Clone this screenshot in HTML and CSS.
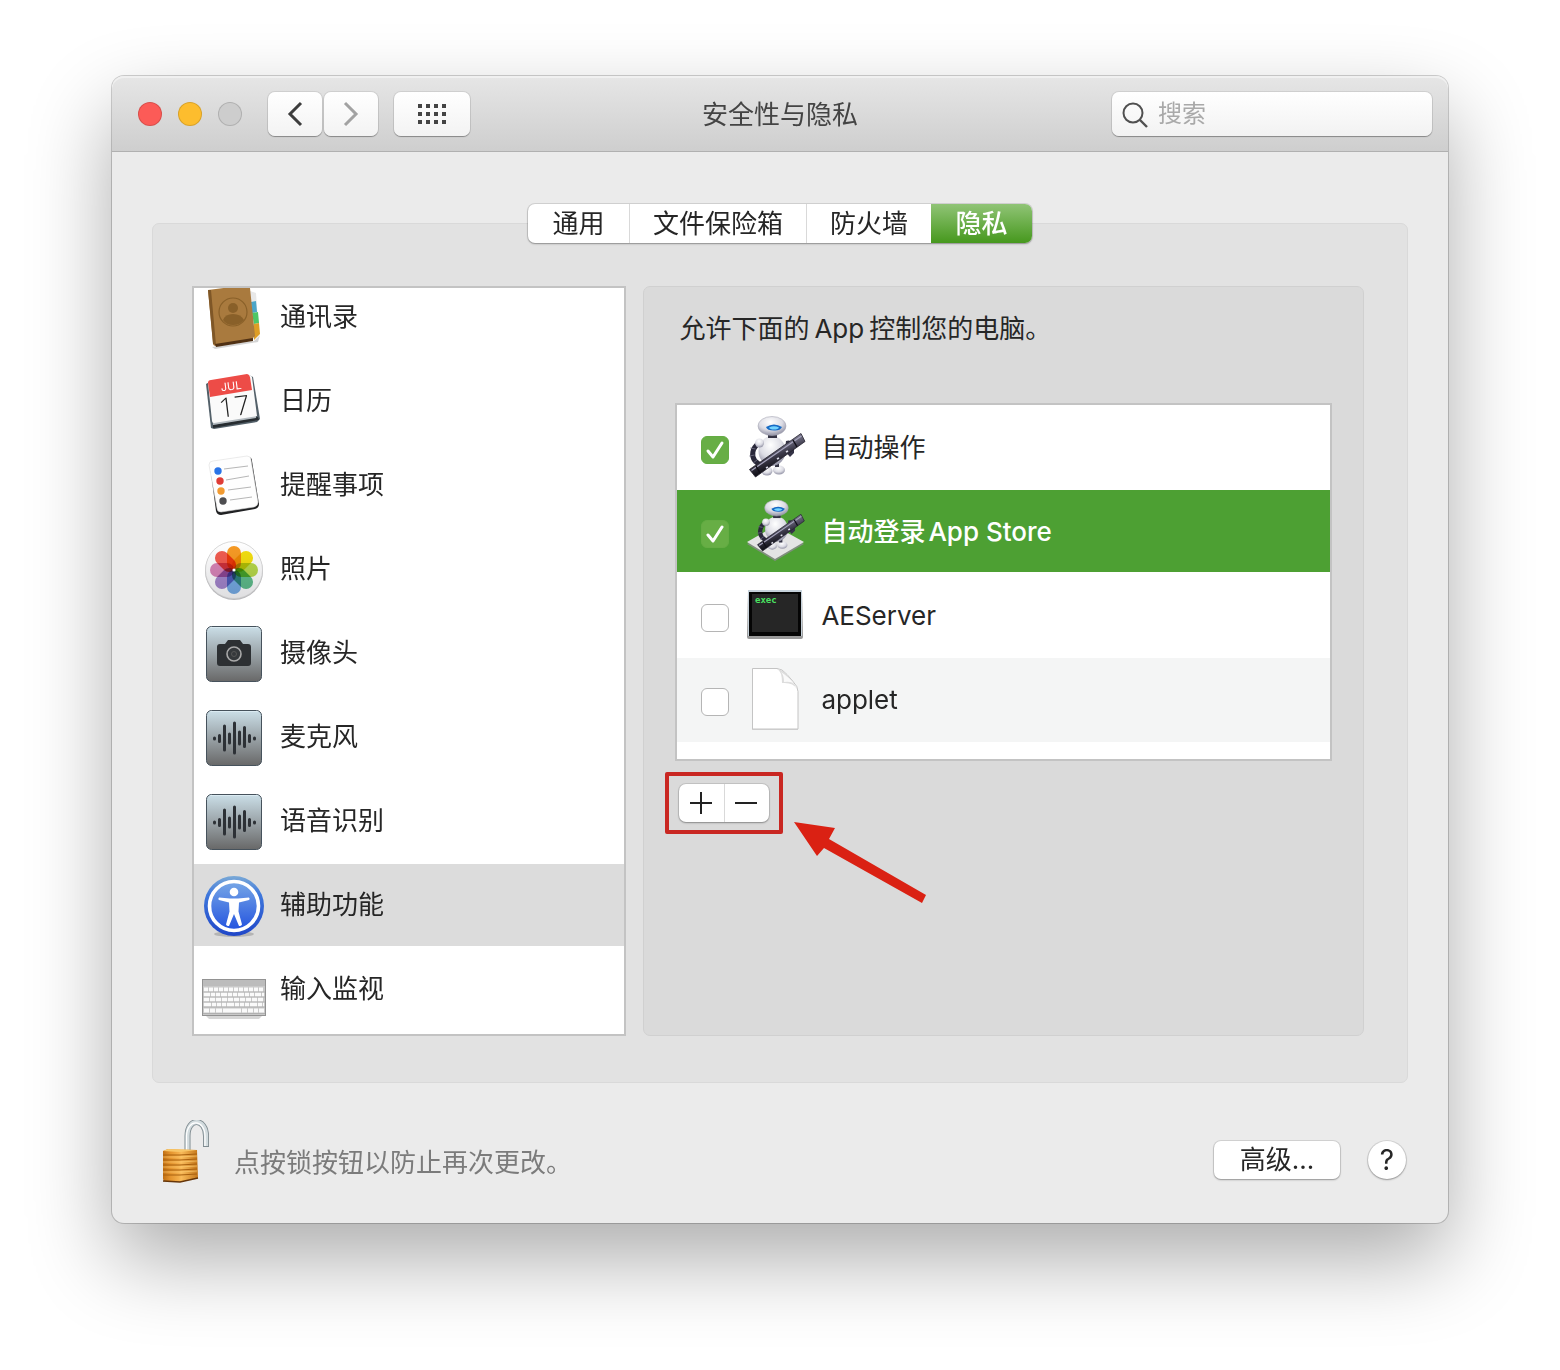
FILE: index.html
```html
<!DOCTYPE html>
<html lang="zh-CN">
<head>
<meta charset="utf-8">
<meta name="viewport" content="width=device-width, initial-scale=1">
<title>安全性与隐私</title>
<link rel="stylesheet" href="styles.css">
</head>
<body>
<svg class="defs" aria-hidden="true">
  <defs>
    <linearGradient id="steel" x1="0" y1="0" x2="0" y2="1"><stop offset="0" stop-color="#cbdfe8"/><stop offset=".45" stop-color="#9fa9ae"/><stop offset="1" stop-color="#686868"/></linearGradient>
    <linearGradient id="blue" x1="0" y1="0" x2="0" y2="1"><stop offset="0" stop-color="#7aa9d6"/><stop offset=".3" stop-color="#3f78dc"/><stop offset="1" stop-color="#1f46c8"/></linearGradient>
    <linearGradient id="blueFace" x1="0" y1="0" x2="0" y2="1"><stop offset="0" stop-color="#77a7e6"/><stop offset="1" stop-color="#2353df"/></linearGradient>
    <linearGradient id="brass" x1="0" y1="0" x2="1" y2="0"><stop offset="0" stop-color="#c06f14"/><stop offset=".2" stop-color="#e3922c"/><stop offset=".45" stop-color="#f3ae4a"/><stop offset=".52" stop-color="#f9bb5a"/><stop offset="1" stop-color="#c4761a"/></linearGradient>
    <linearGradient id="tube" x1=".4" y1=".3" x2=".6" y2=".7"><stop offset="0" stop-color="#77758a"/><stop offset=".5" stop-color="#3a3848"/><stop offset="1" stop-color="#15141c"/></linearGradient>
    <radialGradient id="shell" cx=".45" cy=".3" r=".75"><stop offset="0" stop-color="#fff"/><stop offset=".55" stop-color="#dcdce4"/><stop offset="1" stop-color="#85859a"/></radialGradient>
    <linearGradient id="disc" x1="0" y1="0" x2="0" y2="1"><stop offset="0" stop-color="#fff"/><stop offset="1" stop-color="#dedee0"/></linearGradient>
    <symbol id="wave" viewBox="0 0 64 64">
      <rect x="4.500" y="4.500" width="55" height="55" rx="5" fill="url(#steel)" stroke="#46525c"/>
      <path d="M8 5.500h48" stroke="#e4f2f8" opacity=".7"/>
      <g stroke="#2d3136" stroke-width="3" stroke-linecap="round"><path d="M12.500 32v1M17.500 29.500v6M22.500 20v24M27.500 28v9M32.500 17v30M37.500 26v12M42.500 21.500v19M47.500 29.500v6M52.500 32v1"/></g>
    </symbol>
    <symbol id="robot" viewBox="0 0 64 64">
      <ellipse cx="24" cy="55" rx="5.500" ry="4.500" fill="url(#shell)"/>
      <ellipse cx="36" cy="54" rx="6" ry="4.500" fill="url(#shell)"/>
      <path d="M22 46v7M34 45v6" stroke="#333344" stroke-width="4"/>
      <ellipse cx="29" cy="35" rx="13.500" ry="15" fill="url(#shell)"/>
      <path d="M16 27c-7 5-8 13-4 18l5 4" fill="none" stroke="#29283a" stroke-width="5"/>
      <path d="M12.500 33l-5-1M11.500 39l-5 1M14 44l-4 3" stroke="#656478" stroke-width="1"/>
      <circle cx="16.500" cy="27" r="4.500" fill="url(#shell)"/>
      <path d="M25 18h9v4h-9z" fill="#343344"/>
      <ellipse cx="29" cy="10" rx="14" ry="9.500" fill="url(#shell)" stroke="#a8a8b6" stroke-width=".6"/>
      <path d="M23 11q8-5 16 0-2 4-8 3.500-7 0-8-3.500z" fill="#176ac4"/>
      <path d="M26 11.500q5-2.500 10 0-1 2-5 2t-5-2z" fill="#74d4ff"/>
      <path d="M43 25q7-2 8 6v6l-4 4-5-6" fill="#353347"/>
      <path d="M6.500 53.500L58 17.500l4 8L12.500 61z" fill="url(#tube)" stroke="#24222f" stroke-width=".8"/>
      <path d="M8.500 54.500L58.500 20" stroke="#a6a4bc" stroke-width="1.400"/>
      <path d="M50 24l4 7M13 50l4 7" stroke="#111019" stroke-width="1.500"/>
      <path d="M23 52l2-1M34 43l2-1M43 36l2-1" stroke="#dedeea" stroke-width="1.800"/>
    </symbol>
  </defs>
</svg>

<main class="window">
  <header class="toolbar">
    <div class="toolbar-left">
      <div class="lights">
        <button class="light close" aria-label="关闭"></button>
        <button class="light minimize" aria-label="最小化"></button>
        <button class="light zoom" aria-label="缩放" disabled></button>
      </div>
      <div class="nav">
        <button class="tool" aria-label="后退"><svg width="20" height="28" viewBox="0 0 20 28"><path d="M16 3L5 14l11 11" fill="none" stroke="#3d3d3d" stroke-width="3"/></svg></button>
        <button class="tool" aria-label="前进" disabled><svg width="20" height="28" viewBox="0 0 20 28"><path d="M4 3l11 11L4 25" fill="none" stroke="#a2a2a2" stroke-width="3"/></svg></button>
      </div>
      <button class="tool tool-wide" aria-label="显示全部"><svg width="28" height="20" viewBox="0 0 28 20"><path d="M0 2h28M0 10h28M0 18h28" stroke="#444" stroke-width="4" stroke-dasharray="4 4"/></svg></button>
    </div>
    <h1 class="title">安全性与隐私</h1>
    <label class="search">
      <svg width="28" height="28" viewBox="0 0 28 28" aria-hidden="true"><circle cx="11" cy="13" r="9.500" fill="none" stroke="#505050" stroke-width="2"/><path d="M18 20l7 7" stroke="#505050" stroke-width="2.400"/></svg>
      <input type="search" placeholder="搜索" aria-label="搜索">
    </label>
  </header>

  <div class="content">
    <div class="tabs" role="tablist">
      <button class="tab" role="tab">通用</button>
      <button class="tab" role="tab">文件保险箱</button>
      <button class="tab" role="tab">防火墙</button>
      <button class="tab active" role="tab" aria-selected="true">隐私</button>
    </div>

    <section class="panel">
      <ul class="services">
        <li class="service"><svg class="icon" viewBox="0 0 64 64">
          <path d="M10 61l42-6 6-6-2 7-43 7z" fill="#aaa" opacity=".5"/>
          <path d="M48 5l6 2 3 42-8 6z" fill="#e8e8e8"/><path d="M49 16l5-1 1 11-5 1z" fill="#4ba5c8"/><path d="M50 27l6-1 1 11-5 1z" fill="#4dc766"/><path d="M52 38l5-1 1 11-6 6z" fill="#dd9d25"/>
          <path d="M6 4L45 -1q3 0 3 3l5 48-4 4-35 6q-3 0-3-3z" fill="#a97a3e"/><path d="M6 4l5 54 3 1L9 4z" fill="#7f5727"/>
          <path d="M13 58l38-6v3l-37 6z" fill="#503114"/>
          <circle cx="31" cy="26" r="14" fill="none" stroke="#896029" stroke-width="1.200"/><circle cx="31" cy="22" r="5" fill="#896029"/><path d="M21 34q2-6 10-6t11 6q-4 5-11 5t-10-5z" fill="#896029"/>
        </svg><span>通讯录</span></li>
        <li class="service"><svg class="icon" viewBox="0 0 64 64">
          <path d="M4 14l5-3 38-6 4 2 7 42-3 3-43 7-3-1z" fill="#536069"/>
          <path d="M11 55l45-8 1 3-46 8z" fill="#262c30"/><path d="M11 51l43-7v4l-43 7z" fill="#b4bbc0"/>
          <path d="M6 13L47 5q2 0 3 2l5 39-43 7q-2 0-2-2z" fill="#fafafa"/>
          <path d="M6 13q0-3 3-3l36-6q2 0 3 3l2 13-42 7z" fill="#ed4c47"/>
          <text x="19" y="20" transform="rotate(-7 29 18)" class="cal-month">JUL</text>
          <text x="17" y="46" transform="rotate(-7 31 38)" class="cal-day">17</text>
        </svg><span>日历</span></li>
        <li class="service"><svg class="icon" viewBox="0 0 64 64">
          <path d="M8 12q0-4 4-4l34-5q4 0 4 4l7 43q0 4-4 5l-34 6q-4 0-5-4z" fill="#202123"/>
          <path d="M7 11q0-4 4-4l34-5q4 0 4 4l7 42q0 4-4 5l-33 5q-4 0-4-4z" fill="#fefefe" stroke="#ddd" stroke-width=".6"/>
          <circle cx="16" cy="17" r="3.700" fill="#2973e7"/><circle cx="18" cy="27" r="3.700" fill="#df3c36"/><circle cx="19" cy="37" r="3.700" fill="#f29b31"/><circle cx="21" cy="47" r="3.700" fill="#4d4d50"/>
          <path d="M22 15l24-3M24 26l23-4M26 36l23-3M28 46l22-3" stroke="#b6b6b6" stroke-width="1"/>
        </svg><span>提醒事项</span></li>
        <li class="service"><svg class="icon" viewBox="0 0 64 64">
          <circle cx="32" cy="33" r="29" fill="#b9b9bc"/><circle cx="32" cy="32" r="28.500" fill="url(#disc)" stroke="#ccc" stroke-width=".7"/>
          <g class="petals">
            <rect x="25" y="8" width="14" height="24" rx="7" fill="#f89b24"/>
            <rect x="25" y="8" width="14" height="24" rx="7" fill="#f4df10" transform="rotate(45 32 32)"/>
            <rect x="25" y="8" width="14" height="24" rx="7" fill="#b7d84b" transform="rotate(90 32 32)"/>
            <rect x="25" y="8" width="14" height="24" rx="7" fill="#5fbd8c" transform="rotate(135 32 32)"/>
            <rect x="25" y="8" width="14" height="24" rx="7" fill="#76ace5" transform="rotate(180 32 32)"/>
            <rect x="25" y="8" width="14" height="24" rx="7" fill="#a486cc" transform="rotate(225 32 32)"/>
            <rect x="25" y="8" width="14" height="24" rx="7" fill="#d884b7" transform="rotate(270 32 32)"/>
            <rect x="25" y="8" width="14" height="24" rx="7" fill="#f25c50" transform="rotate(315 32 32)"/>
          </g><circle cx="32" cy="32" r="1.600" fill="#fff"/>
        </svg><span>照片</span></li>
        <li class="service"><svg class="icon" viewBox="0 0 64 64">
          <rect x="4.500" y="4.500" width="55" height="55" rx="5" fill="url(#steel)" stroke="#46525c"/><path d="M8 5.500h48" stroke="#e4f2f8" opacity=".7"/>
          <path d="M18 22h5l3-4h12l3 4h5q3 0 3 3v16q0 3-3 3H18q-3 0-3-3V25q0-3 3-3z" fill="#2d3033"/><circle cx="32" cy="32" r="7" fill="#35383b" stroke="#aaa" stroke-width="1.600"/><circle cx="32" cy="32" r="2.500" fill="none" stroke="#565656"/>
        </svg><span>摄像头</span></li>
        <li class="service"><svg class="icon"><use href="#wave"/></svg><span>麦克风</span></li>
        <li class="service"><svg class="icon"><use href="#wave"/></svg><span>语音识别</span></li>
        <li class="service selected" aria-current="true"><svg class="icon" viewBox="0 0 64 64">
          <ellipse cx="32" cy="60" rx="20" ry="3" fill="#999" opacity=".6"/>
          <circle cx="32" cy="32" r="30" fill="url(#blue)"/><circle cx="32" cy="32" r="24.500" fill="url(#blueFace)" stroke="#fff" stroke-width="3.600"/>
          <circle cx="32" cy="18" r="4.300" fill="#fff"/>
          <path d="M17 23.500l11 1h8l11-1q1.500 1.500 0 2.500l-10 2.500-.5 9 3.500 13q-1 2-3 1.500L32 40l-5 12q-2 .5-3-1.500l3.500-13-.5-9L17 26q-1.500-1 0-2.500z" fill="#fff"/>
        </svg><span>辅助功能</span></li>
        <li class="service"><svg class="icon" viewBox="0 0 64 64">
          <path d="M3 57h58l-4 4H7z" fill="#777" opacity=".3"/>
          <rect x=".5" y="21.500" width="63" height="36" fill="#c9c9c9" stroke="#929292"/><path d="M1 22h62v6H1z" fill="#bcbcbc"/>
          <g stroke="#fafafa" stroke-width="4"><path d="M2 31.500h60" stroke-dasharray="4 1"/><path d="M2 36.500h60" stroke-dasharray="6 1 4 1 4 1"/><path d="M2 41.500h60" stroke-dasharray="5 1"/><path d="M2 46.500h60" stroke-dasharray="7 1 4 1 4 1 4 1"/><path d="M2 52.500h5M8 52.500h5M14 52.500h6M21 52.500h18M40 52.500h5M46 52.500h5M52 52.500h4M57 52.500h5"/></g>
          <path d="M1 34h62M1 39h62M1 44h62M1 49h62M1 55.500h62" stroke="#aaa" stroke-width=".8"/>
        </svg><span>输入监视</span></li>
      </ul>

      <section class="detail">
        <h2 class="prompt">允许下面的<span class="latin">App</span>控制您的电脑。</h2>
        <ul class="apps">
          <li><label class="app"><input type="checkbox" checked><svg class="icon"><use href="#robot"/></svg><span>自动操作</span></label></li>
          <li><label class="app selected"><input type="checkbox" checked><svg class="icon" viewBox="0 0 64 64">
            <path d="M4 44L32 28l29 16-29 17z" fill="#808e7d"/><path d="M4 42L32 26l29 16-29 17z" fill="#e4e4e4"/><use href="#robot" x="9" y="-1" width="54" height="55"/>
          </svg><span>自动登录<span class="latin">App Store</span></span></label></li>
          <li><label class="app"><input type="checkbox"><svg class="icon" viewBox="0 0 64 64">
            <path d="M5 7h54l1 46q0 2-2 2H6q-2 0-2-2z" fill="#9a9a9a"/><path d="M5 6h54v46H5z" fill="#c5d1da"/><path d="M6 8h52v44H6z" fill="#050505"/><path d="M9 10h46v38H9z" fill="#262626"/>
            <text x="12" y="19" class="exec">exec</text>
          </svg><span>AEServer</span></label></li>
          <li><label class="app striped"><input type="checkbox"><svg class="icon" viewBox="0 0 64 64">
            <path d="M9 2h26q12 4 20 19v41H9z" fill="#bfbfbf" opacity=".6"/><path d="M9.500 .5H34q5 0 10 6l6 7q5 5 5 10v37.500H9.500z" fill="#fff" stroke="#c4c4c4"/>
            <path d="M34 1q5 2 5 14 11-1 15 6-4-8-10-14-5-6-10-6z" fill="#ddd"/><path d="M38 4q3 3 3 10 7-1 10 2-4-6-13-12z" fill="#fafafa"/>
          </svg><span>applet</span></label></li>
        </ul>
        <div class="edit">
          <button class="edit-button" aria-label="添加"><svg width="24" height="24" viewBox="0 0 24 24"><path d="M0 12h22M11 1v22" stroke="#222" stroke-width="2"/></svg></button>
          <button class="edit-button" aria-label="移除"><svg width="24" height="24" viewBox="0 0 24 24"><path d="M0 12h22" stroke="#222" stroke-width="2"/></svg></button>
          <div class="highlight"></div>
          <svg class="arrow" width="136" height="84" viewBox="0 0 136 84"><path d="M1 2l41 6-6 11L133 75l-4 8L31 28l-7 8z" fill="#da2113"/></svg>
        </div>
      </section>
    </section>

    <footer class="footer">
      <button class="lock" aria-label="锁定"><svg width="50" height="64" viewBox="0 0 50 64">
        <path d="M25.500 32V16C25.500-3 44-2 44 16v11" fill="none" stroke="#7f8b90" stroke-width="6"/><path d="M25.500 32V16C25.500-3 44-2 44 16v10" fill="none" stroke="#d3dcdf" stroke-width="4.200"/><path d="M24.500 32V16C25-2 43-1 43 16v10" fill="none" stroke="#fff" stroke-width="1.200"/>
        <path d="M1 31l5-2 29 1 1 28-18 4-16-1-1-2z" fill="url(#brass)"/><path d="M1 31l5-2 29 1-17 2z" fill="#f8c667"/>
        <path d="M1 35h17l17-1M1 40h17l17-1M1 45h17l17-1M1 50h17l17-1M1 55h17l17-1" fill="none" stroke="#a8600f" stroke-width="1"/><path d="M1 37h17l17-1M1 42h17l17-1M1 47h17l17-1M1 52h17l17-1" fill="none" stroke="#ffd075" stroke-width="1" opacity=".6"/><path d="M1 61l17 1 18-4" fill="none" stroke="#663508" stroke-width="1.500"/>
      </svg></button>
      <p class="note">点按锁按钮以防止再次更改。</p>
      <button class="advanced">高级...</button>
      <button class="help" aria-label="帮助">?</button>
    </footer>
  </div>
</main>
</body>
</html>
```
FILE: styles.css
```css
* { box-sizing: border-box; }

body {
  margin: 0;
  padding: 76px 112px 148px;
  background: #fff;
  color: #262626;
  font: 26px/40px Inter, "Noto Sans CJK SC", sans-serif;
}

button, input {
  margin: 0;
  padding: 0;
  border: 0;
  color: inherit;
  font: inherit;
}

ul { margin: 0; padding: 0; list-style: none; }
svg { display: block; flex: none; }
.defs { position: absolute; width: 0; height: 0; }

.window {
  border-radius: 12px;
  background: #ebebeb;
  box-shadow: 0 0 0 1px rgba(0, 0, 0, .18), 0 36px 84px rgba(0, 0, 0, .33);
}

/* Toolbar */
.toolbar {
  display: grid;
  grid-template-columns: 1fr auto 1fr;
  align-items: center;
  height: 76px;
  padding: 0 16px;
  border-radius: 12px 12px 0 0;
  background: linear-gradient(#e6e6e6, #cecece);
  box-shadow: inset 0 2px 0 #f0f0f0, inset 0 -1px 0 #b0b0b0;
}
.toolbar-left { display: flex; align-items: center; gap: 16px; }
.lights { display: flex; gap: 16px; margin: 0 10px; }
.light { width: 24px; height: 24px; border: 1px solid rgba(0, 0, 0, .14); border-radius: 50%; }
.close { background: #fc5b57; }
.minimize { background: #fdbd2e; }
.zoom { background: #cdcdcd; }
.nav { display: flex; gap: 2px; }
.tool {
  display: grid;
  place-items: center;
  width: 54px;
  height: 44px;
  border-radius: 7px;
  background: linear-gradient(#fff, #f3f3f3);
  box-shadow: 0 0 0 1px rgba(0, 0, 0, .08), 0 1px 1px rgba(0, 0, 0, .3);
}
.tool-wide { width: 76px; }
.title { margin: 0; padding-top: 2px; font-size: 26px; font-weight: 400; color: #444; }
.search {
  display: flex;
  align-items: center;
  justify-self: end;
  gap: 8px;
  width: 320px;
  height: 44px;
  padding: 0 10px;
  border-radius: 7px;
  background: linear-gradient(#fff, #f2f2f2);
  box-shadow: 0 0 0 1px rgba(0, 0, 0, .08), 0 1px 1px rgba(0, 0, 0, .3);
}
.search input { flex: 1; min-width: 0; background: none; font-size: 24px; outline: 0; }
.search input::placeholder { color: #a9a9a9; opacity: 1; }

/* Tabs straddle the top edge of the panel */
.content { padding: 52px 40px 39px; }
.tabs {
  position: relative;
  display: flex;
  width: fit-content;
  margin: 0 auto -20px;
  border-radius: 7px;
  background: #fff;
  box-shadow: 0 0 0 1px rgba(0, 0, 0, .1), 0 1px 2px rgba(0, 0, 0, .3);
}
.tab {
  min-width: 101px;
  height: 39px;
  padding: 0 23px;
  border-left: 1px solid #d9d9d9;
  background: none;
  line-height: 39px;
}
.tab:first-child { border-left: 0; }
.tab.active {
  padding: 0 22px;
  border: 0;
  border-radius: 0 7px 7px 0;
  background: linear-gradient(#90c476, #46981d);
  color: #fff;
  font-weight: 500;
}

.panel {
  display: grid;
  grid-template-columns: 434fr 720fr;
  gap: 17px;
  padding: 62px 43px 46px 39px;
  border: 1px solid #d9d9d9;
  border-radius: 7px;
  background: #e2e2e2;
}

/* Services: the list is scrolled a little past its first row */
.services {
  overflow: hidden;
  padding-bottom: 2px;
  border: 2px solid #c3c3c3;
  background: #fff;
}
.service {
  display: flex;
  align-items: center;
  gap: 14px;
  height: 82px;
  margin-bottom: 2px;
  padding-left: 8px;
}
.service:first-child { margin-top: -12px; }
.service.selected { background: #dcdcdc; }
.icon { width: 64px; height: 64px; }
.service .icon { margin-top: 2px; }
.petals rect { mix-blend-mode: multiply; }
.cal-month { fill: #fff; font-size: 11px; }
.cal-day { fill: #222; font: 300 27px "Open Sans", sans-serif; }
.exec { fill: #4ae261; font: bold 9px "DejaVu Sans Mono", monospace; }

/* Detail */
.detail {
  padding: 22px 31px;
  border: 1px solid #d0d0d0;
  border-radius: 7px;
  background: #dadada;
}
.prompt { margin: 0 4px 54px; font-size: 26px; font-weight: 400; }
.prompt .latin { margin: 0 5px; }
.apps {
  padding: 1px 0 17px;
  border: 2px solid #c3c3c3;
  background: #fff;
}
.app {
  display: flex;
  align-items: center;
  gap: 14px;
  height: 84px;
  padding-left: 24px;
}
.app.selected {
  height: 82px;
  margin-bottom: 2px;
  padding-top: 2px;
  background: #4da033;
  color: #fff;
  font-weight: 500;
}
.app.striped { background: #f4f5f5; }
.latin { margin-left: 3px; }
.app input {
  appearance: none;
  flex: none;
  width: 28px;
  height: 28px;
  margin-top: 4px;
  border: 1px solid #b5b5b5;
  border-radius: 6px;
  background: #fff;
}
.app input:checked {
  border-color: #64ac43;
  background: #67ae45 url("data:image/svg+xml,%3Csvg xmlns='http://www.w3.org/2000/svg' viewBox='0 0 26 26'%3E%3Cpath d='M6 14l5 6L20 6' fill='none' stroke='white' stroke-width='3' stroke-linecap='round' stroke-linejoin='round'/%3E%3C/svg%3E") center / 26px;
}

.edit {
  position: relative;
  display: flex;
  width: fit-content;
  margin: 23px 4px 0;
  border-radius: 7px;
  background: #fff;
  box-shadow: 0 0 0 1px rgba(0, 0, 0, .1), 0 1px 2px rgba(0, 0, 0, .3);
}
.edit-button {
  display: grid;
  place-items: center;
  width: 45px;
  height: 38px;
  background: none;
}
.edit-button + .edit-button { border-left: 1px solid #d9d9d9; }
.highlight {
  position: absolute;
  inset: -12px -14px;
  border: 4px solid #c92722;
  border-radius: 2px;
  pointer-events: none;
}
.arrow { position: absolute; left: 114px; top: 36px; pointer-events: none; }

/* Footer */
.footer { display: flex; align-items: center; padding: 37px 2px 0 10px; }
.lock { background: none; }
.note { flex: 1; margin: 22px 22px 0; color: #7b7b7b; }
.advanced, .help {
  margin-top: 16px;
  background: #fff;
  box-shadow: 0 0 0 1px rgba(0, 0, 0, .1), 0 1px 2px rgba(0, 0, 0, .3);
}
.advanced { width: 126px; height: 38px; margin-right: 28px; border-radius: 7px; line-height: 38px; }
.help { width: 38px; height: 38px; border-radius: 50%; line-height: 38px; font-size: 28px; }
```
